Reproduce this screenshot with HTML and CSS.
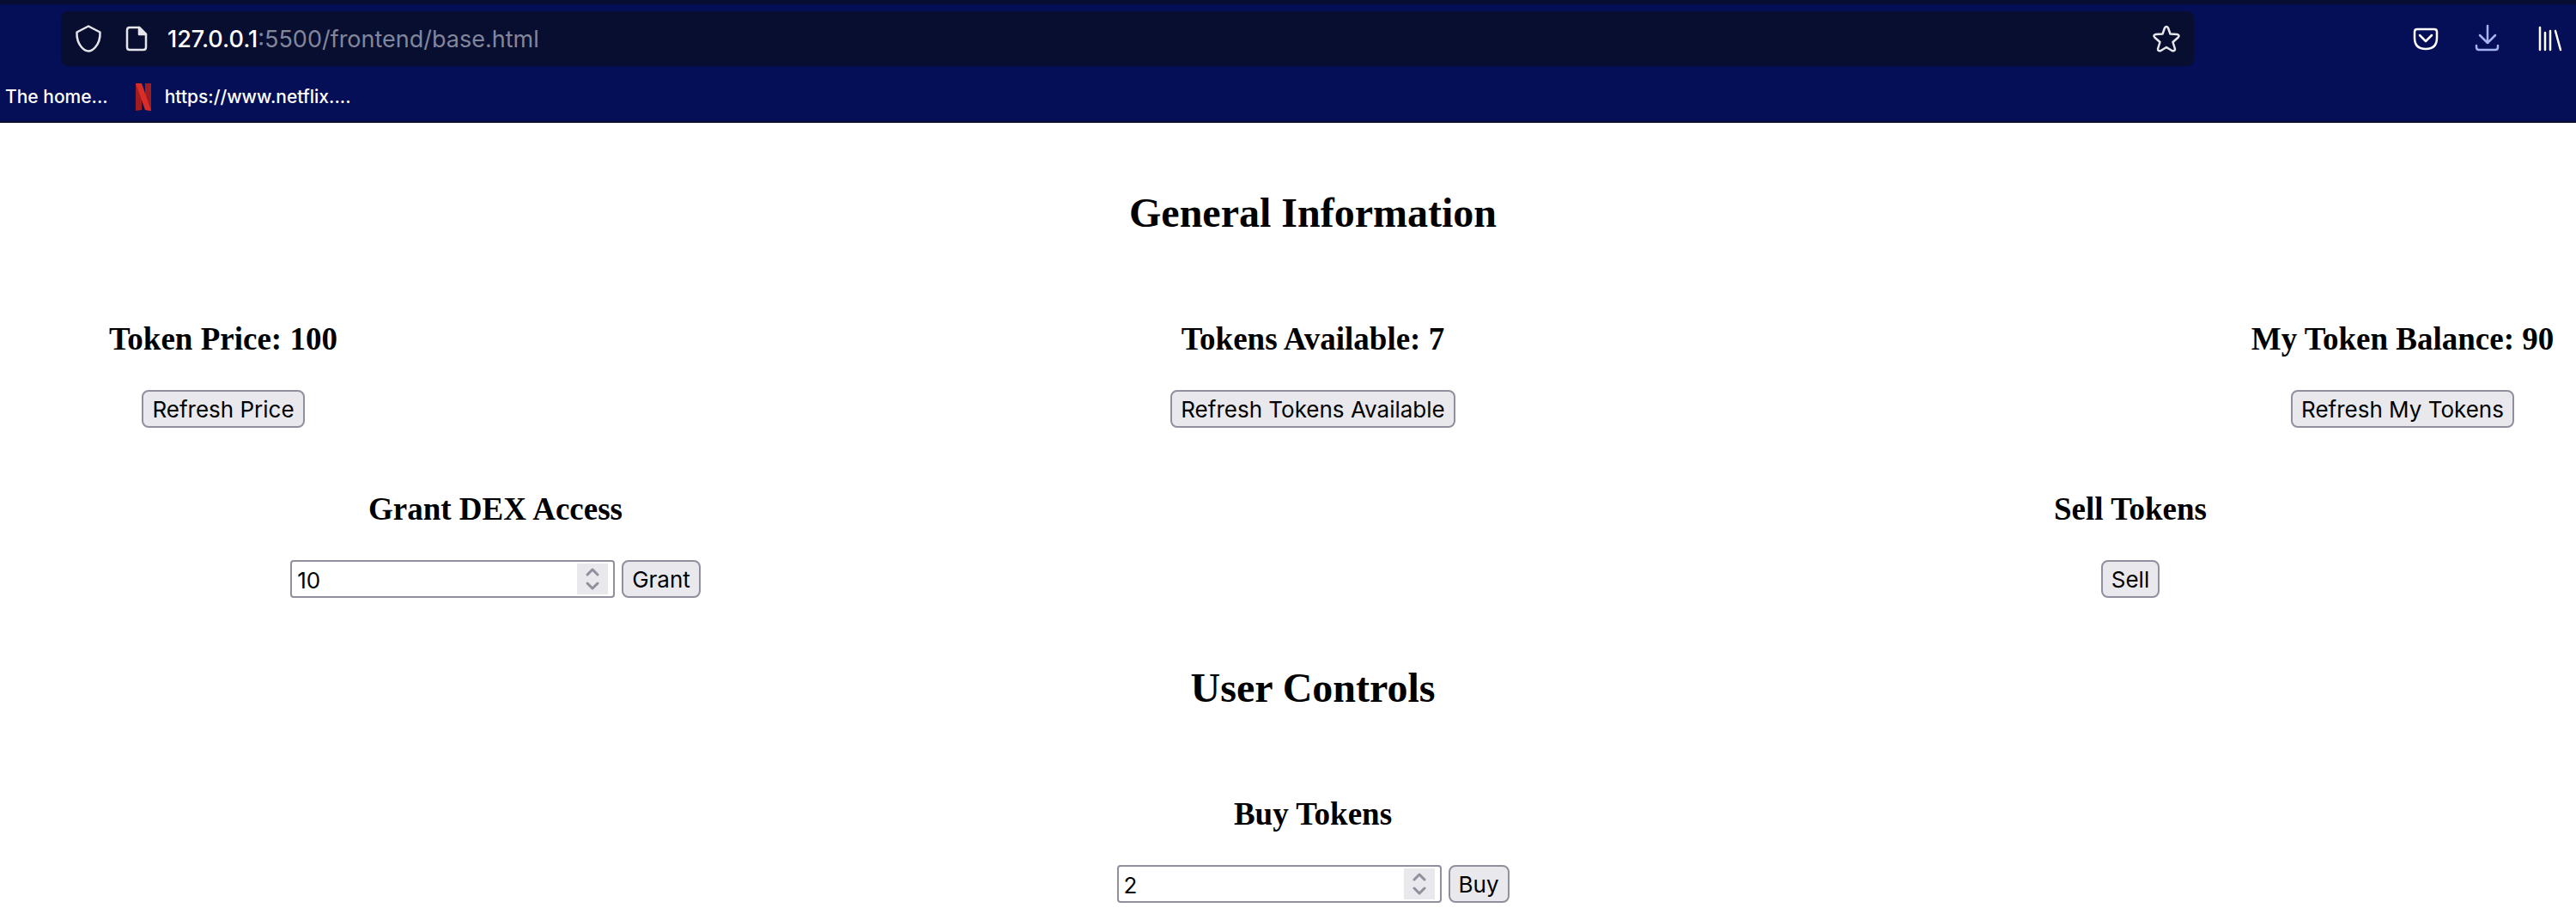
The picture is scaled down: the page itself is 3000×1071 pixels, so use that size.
FILE: index.html
```html
<!DOCTYPE html>
<html lang="en">
<head>
<meta charset="utf-8">
<title>Token DEX</title>
<link rel="stylesheet" href="styles.css">
</head>
<body>
<header class="browser">
  <nav class="toolbar" aria-label="Navigation toolbar">
    <div class="urlbar">
      <svg class="icon" viewBox="0 0 32 32" aria-hidden="true"><path d="M16 1.500 29.500 8.500Q30 19 24 26Q20 30.500 16 30.500Q12 30.500 8 26Q2 19 2.500 8.500Z"/></svg>
      <svg class="icon" viewBox="0 0 32 32" aria-hidden="true"><path d="M12 3H23L31 11V26Q31 29 28 29H12Q9 29 9 26V6Q9 3 12 3Z"/><path class="fill" d="M23 3V11H31Z"/></svg>
      <p class="address"><span class="host">127.0.0.1</span>:5500/frontend/base.html</p>
      <button class="tool" aria-label="Bookmark this page"><svg class="icon" viewBox="0 0 32 32"><path d="M14 3.500Q16 .5 18 3.500L20.500 10.500L28.500 11Q32 12 29.500 14.700L23.500 20L26 28Q26 31 22.500 30L16 26L9.500 30Q6 31 6 28L8.500 20L2.500 14.700Q0 12 3.500 11L11.500 10.500Z"/></svg></button>
    </div>
    <div class="tools">
      <button class="tool" aria-label="Save to Pocket"><svg class="icon" viewBox="0 0 32 32"><path d="M6 5H26Q29 5 29 8V15Q29 28 16 28Q3 28 3 15V8Q3 5 6 5ZM9 12 16 19 23 12"/></svg></button>
      <button class="tool download" aria-label="Downloads"><svg class="icon" viewBox="0 0 32 32"><path d="M16 1V21M7 12 16 21 25 12M3 24V26Q3 29 6 29H25Q28 29 28 26V24"/></svg></button>
      <button class="tool" aria-label="Library"><svg class="icon" viewBox="0 0 32 32"><path d="M5 3V29M11 9V29M17 7V29M23 7 29 29"/></svg></button>
    </div>
  </nav>
  <nav class="bookmarks" aria-label="Bookmarks">
    <a class="bookmark" href="#">The home...</a>
    <a class="bookmark" href="#"><svg class="netflix" viewBox="0 0 18 32" aria-hidden="true"><path fill="#9f1d20" d="M0 0H7V31L0 32ZM11 0H18V32L11 31Z"/><path fill="#d92d27" d="M0 0H7L18 32 11 31Z"/></svg>https://www.netflix....</a>
  </nav>
</header>
<main class="page">
  <h2>General Information</h2>
  <div class="row">
    <section class="cell"><h3>Token Price: 100</h3><button class="btn">Refresh Price</button></section>
    <section class="cell"><h3>Tokens Available: 7</h3><button class="btn">Refresh Tokens Available</button></section>
    <section class="cell"><h3>My Token Balance: 90</h3><button class="btn">Refresh My Tokens</button></section>
  </div>
  <div class="row pair">
    <section class="cell">
      <h3><label for="grant">Grant DEX Access</label></h3>
      <div class="controls">
        <div class="number"><input id="grant" type="number" value="10"><svg class="spin" viewBox="0 0 36 36" aria-hidden="true"><path d="M12 13 18 7 24 13M12 23 18 29 24 23"/></svg></div>
        <button class="btn">Grant</button>
      </div>
    </section>
    <section class="cell"><h3>Sell Tokens</h3><button class="btn">Sell</button></section>
  </div>
  <h2>User Controls</h2>
  <div class="row single">
    <section class="cell">
      <h3><label for="buy">Buy Tokens</label></h3>
      <div class="controls">
        <div class="number"><input id="buy" type="number" value="2"><svg class="spin" viewBox="0 0 36 36" aria-hidden="true"><path d="M12 13 18 7 24 13M12 23 18 29 24 23"/></svg></div>
        <button class="btn">Buy</button>
      </div>
    </section>
  </div>
</main>
</body>
</html>
```
FILE: styles.css
```css
* { box-sizing: border-box; }

body {
  margin: 0;
  background: #fff;
  color: #000;
  font-family: "Liberation Serif", "Times New Roman", serif;
}

.browser {
  padding-top: 8px;
  border-top: 5px solid #080e30;
  border-bottom: 2px solid #080e30;
  background: #050f57;
  color: #fff;
  font-family: Inter, sans-serif;
}

.toolbar { display: flex; align-items: center; padding: 0 15px 0 71px; }

.urlbar {
  display: flex;
  flex: 1;
  align-items: center;
  gap: 20px;
  height: 64px;
  padding: 0 16px;
  border-radius: 8px;
  background: #080e30;
  color: #e6e6ea;
}

.address {
  flex: 1;
  margin: 0;
  padding: 2px 0 0 4px;
  color: #83869a;
  font-size: 27px;
  line-height: 32px;
}

.host { color: #fff; font-weight: 500; }

.tools { display: flex; gap: 40px; margin-left: 254px; }

.tool {
  display: flex;
  padding: 0;
  border: 0;
  background: none;
  color: inherit;
}

.tools .tool { color: #fff; }
.tools .download { color: #a3b4ee; }

.icon {
  width: 32px;
  height: 32px;
  overflow: visible;
  fill: none;
  stroke: currentColor;
  stroke-width: 2.5;
  stroke-linecap: round;
  stroke-linejoin: round;
}

.icon .fill { fill: currentColor; }

.bookmarks {
  display: flex;
  align-items: center;
  gap: 32px;
  height: 64px;
  padding: 8px 6px 0;
}

.bookmark {
  display: flex;
  align-items: center;
  gap: 16px;
  color: #fff;
  font-size: 21px;
  font-weight: 500;
  line-height: 32px;
  text-decoration: none;
}

.netflix { width: 18px; height: 32px; }

.page { padding: 77px 0 16px 58px; }

h2, h3 { margin: 0; text-align: center; }
h2 { margin-bottom: 98px; font-size: 48px; line-height: 56px; }
h3 { margin-bottom: 38px; font-size: 37px; line-height: 42px; }

.row { display: flex; justify-content: space-between; }
.row + .row { margin-top: 74px; }
.row + h2 { margin-top: 77px; }

.cell {
  display: flex;
  flex: 0 1 404px;
  flex-direction: column;
  align-items: center;
}

.pair { padding: 0 277px; }
.pair .cell, .single .cell { flex-basis: 484px; }
.single { justify-content: center; }

.controls { display: flex; gap: 8px; }

.btn, .number input {
  height: 44px;
  border: 2px solid #8f8f9d;
  color: #000;
  font-family: Inter, sans-serif;
  font-size: 26px;
  line-height: 32px;
}

.btn { padding: 2px 10px 0; border-radius: 8px; background: #e9e9ed; }

.number { position: relative; display: flex; }

.number input {
  width: 378px;
  margin: 0;
  padding: 2px 48px 0 6px;
  border-radius: 4px;
  background: #fff;
  appearance: textfield;
}

.spin {
  position: absolute;
  top: 4px;
  right: 8px;
  width: 36px;
  height: 36px;
  background: #e9e9ed;
  fill: none;
  stroke: #8f8f9d;
  stroke-width: 3;
  stroke-linecap: round;
  stroke-linejoin: round;
}
```
